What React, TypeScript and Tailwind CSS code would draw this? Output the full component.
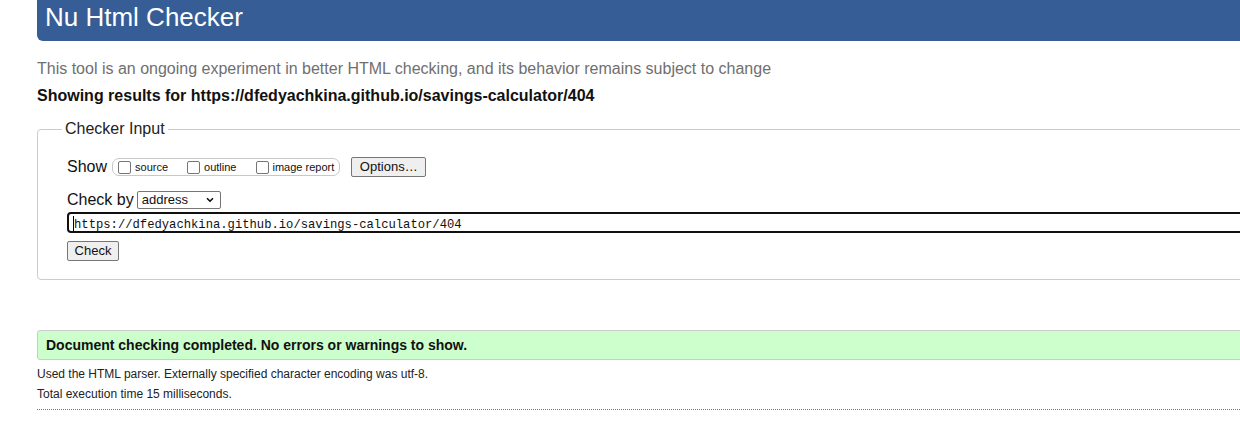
import { ChevronDown } from 'lucide-react';

const Checkbox = () => (
  <span className="inline-block w-[13px] h-[13px] border border-[#767676] rounded-[2px] bg-white shrink-0" />
);

const App = () => {
  return (
    <div className="w-[1240px] h-[436px] overflow-hidden bg-white font-['Liberation_Sans',Arial,sans-serif] text-[#111]">
      <div className="w-[1300px] pl-[37px]">
        <header className="h-[41px] bg-[#365d95] rounded-bl-[6px] pl-[8px] pt-[4px]">
          <h1 className="text-[26px] leading-[26px] text-white">Nu Html Checker</h1>
        </header>

        <p className="mt-[19px] text-[16px] leading-[18px] text-[#6f6f6f]">
          This tool is an ongoing experiment in better HTML checking, and its behavior remains subject to change
        </p>
        <p className="mt-[9px] text-[16px] leading-[18px] font-bold">
          Showing results for https://dfedyachkina.github.io/savings-calculator/404
        </p>

        <fieldset className="mt-[15px] border border-[#cccccc] rounded-[4px] pl-[29px] pt-[19px] pb-[18px]">
          <legend className="-ml-[5px] px-[3px] text-[16px] leading-[18px] text-[#222]">Checker Input</legend>

          <div className="flex items-center h-[20px]">
            <span className="text-[16px] leading-[18px]">Show</span>
            <div className="ml-[5px] flex items-center h-[18px] border border-[#c8c8c8] rounded-[7px] pl-[5px] pr-[5px] text-[11px]">
              <label className="flex items-center">
                <Checkbox />
                <span className="ml-[4px]">source</span>
              </label>
              <label className="flex items-center ml-[19px]">
                <Checkbox />
                <span className="ml-[4px]">outline</span>
              </label>
              <label className="flex items-center ml-[20px]">
                <Checkbox />
                <span className="ml-[3px]">image report</span>
              </label>
            </div>
            <button className="ml-[11px] w-[75px] h-[20px] border border-[#767676] rounded-[2px] bg-[#efefef] text-[13px] leading-[18px]">
              Options…
            </button>
          </div>

          <div className="mt-[13px] flex items-center h-[19px]">
            <span className="text-[16px] leading-[18px]">Check by</span>
            <div className="ml-[3px] w-[84px] h-[18px] border border-[#767676] rounded-[2px] bg-white flex items-center justify-between pl-[4px] pr-[5px] text-[13px]">
              <span>address</span>
              <ChevronDown className="w-[10px] h-[10px]" strokeWidth={4} />
            </div>
          </div>

          <div className="mt-[3px] h-[21px] border-2 border-[#101010] rounded-[4px] flex items-center pl-[4px] pt-[4px] font-['Liberation_Mono',monospace] text-[12.2px]">
            <span className="inline-block w-[1px] h-[15px] bg-black -mt-[2px]" />
            <span className="leading-[14px]">https://dfedyachkina.github.io/savings-calculator/404</span>
          </div>

          <button className="mt-[8px] block w-[52px] h-[20px] border border-[#767676] rounded-[2px] bg-[#efefef] text-[13px] leading-[18px]">
            Check
          </button>
        </fieldset>

        <div className="mt-[50px] h-[30px] border border-[#cccccc] rounded-l-[3px] bg-[#ccffcc] pl-[8px] text-[14px] leading-[28px] font-bold">
          Document checking completed. No errors or warnings to show.
        </div>

        <p className="mt-[7px] text-[12px] leading-[14px] text-[#222]">
          Used the HTML parser. Externally specified character encoding was utf-8.
        </p>
        <p className="mt-[6px] text-[12px] leading-[14px] text-[#222]">Total execution time 15 milliseconds.</p>

        <div className="mt-[8px] border-t border-dotted border-[#777]" />
      </div>
    </div>
  );
};

export default App;
